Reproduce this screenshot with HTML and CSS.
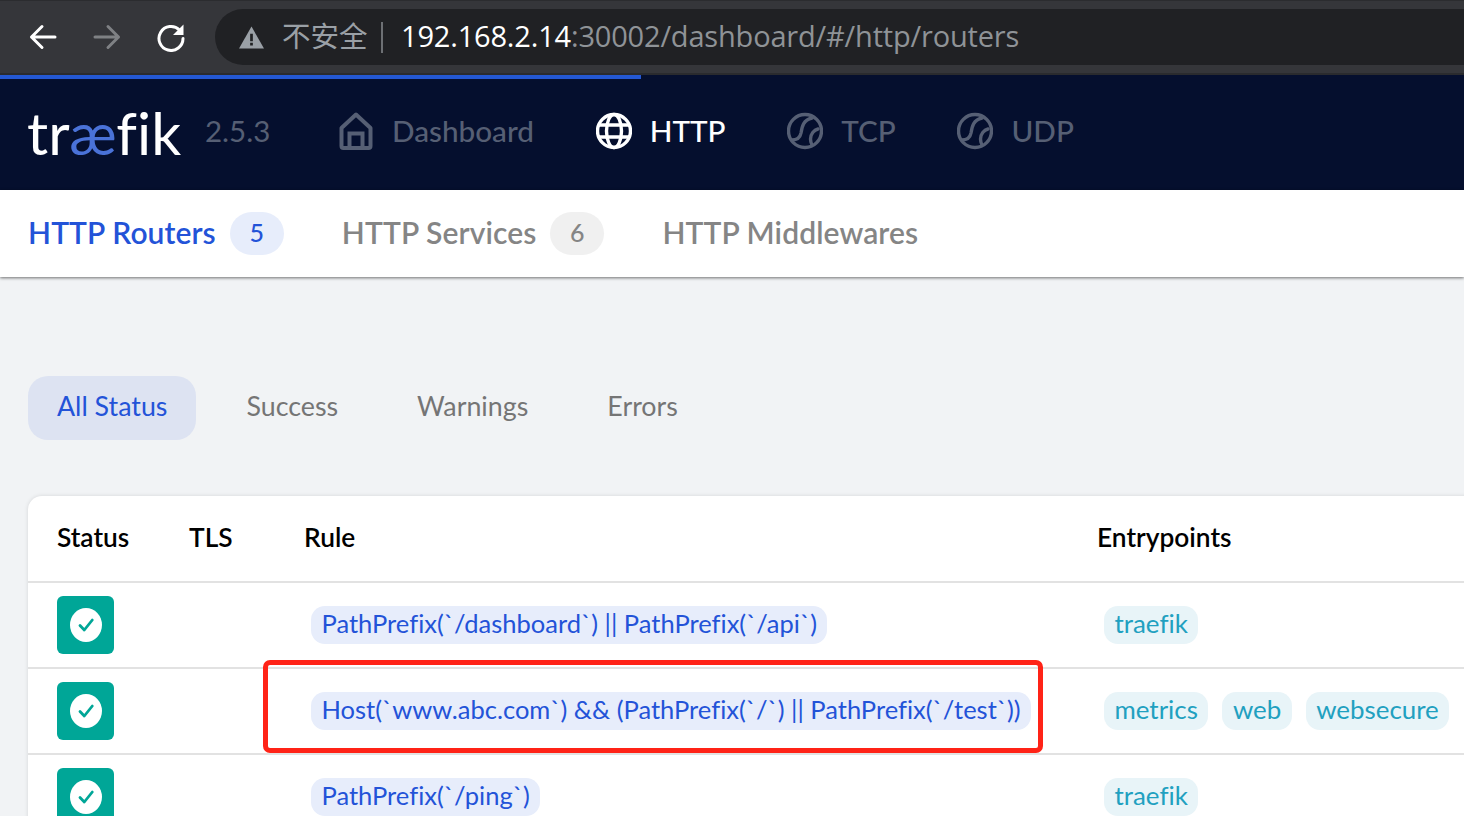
FILE: index.html
```html
<!DOCTYPE html>
<html lang="en">
<head>
<meta charset="utf-8">
<title>Traefik</title>
<link rel="stylesheet" href="styles.css">
</head>
<body>
<div class="browser">
  <svg class="bicon" width="30" height="30" viewBox="0 0 30 30"><path d="M27 15H3.500M14 4.500 3.500 15 14 25.500" fill="none" stroke="#fff" stroke-width="3" stroke-linecap="round" stroke-linejoin="round"/></svg>
  <svg class="bicon dim" width="30" height="30" viewBox="0 0 30 30"><path d="M3 15h23.500M16 4.500 26.500 15 16 25.500" fill="none" stroke="#7f8184" stroke-width="3" stroke-linecap="round" stroke-linejoin="round"/></svg>
  <svg class="bicon" width="30" height="30" viewBox="0 0 30 30"><path d="M23.500 8A12 12 0 1 0 27 16.500" fill="none" stroke="#fff" stroke-width="3" stroke-linecap="round"/><path d="M27.500 2.500v10.500H17z" fill="#fff"/></svg>
  <div class="omni">
    <svg class="warn" width="25" height="23" viewBox="0 0 24 22"><path d="M12 .5 24 21.500H0z" fill="#9aa0a6"/><path d="M10.700 7.500h2.600v7h-2.600zM10.700 16h2.600v2.600h-2.600z" fill="#202124"/></svg>
    <span class="insecure">不安全</span>
    <span class="omni-sep"></span>
    <span class="url"><span class="host">192.168.2.14</span>:30002/dashboard/#/http/routers</span>
  </div>
</div>
<div class="progress"></div>
<header class="topbar">
  <div class="logo">tr<span class="ae">æ</span>fik</div>
  <div class="version">2.5.3</div>
  <nav class="mainnav">
    <a class="navitem">
      <svg width="36" height="38" viewBox="0 0 36 38"><path d="M3.500 16 18 2.500 32.500 16v18a2 2 0 0 1-2 2h-25a2 2 0 0 1-2-2z" fill="none" stroke="currentColor" stroke-width="4" stroke-linejoin="round"/><path d="M11.500 36V21.500h13V36" fill="none" stroke="currentColor" stroke-width="4"/></svg>
      Dashboard</a>
    <a class="navitem">
      <svg class="on" width="36" height="38" viewBox="0 0 36 38"><g fill="none" stroke="currentColor" stroke-width="3.400"><circle cx="18" cy="19" r="16.500"/><ellipse cx="18" cy="19" rx="7.500" ry="16.500"/><path d="M3 13h30M3 25h30"/></g></svg>
      <span class="on">HTTP</span></a>
    <a class="navitem">
      <svg width="36" height="38" viewBox="0 0 36 38"><g fill="none" stroke="currentColor" stroke-width="3.400" stroke-linecap="round"><circle cx="18" cy="19" r="16.500"/><path d="M5 28C10 28 13 26 14 21 15 15 16 8 25 6M31 17C27 18 23.500 22 23.500 27 23.500 29 24 31 25 33"/></g></svg>
      TCP</a>
    <a class="navitem">
      <svg width="36" height="38" viewBox="0 0 36 38"><g fill="none" stroke="currentColor" stroke-width="3.400" stroke-linecap="round"><circle cx="18" cy="19" r="16.500"/><path d="M5 28C10 28 13 26 14 21 15 15 16 8 25 6M31 17C27 18 23.500 22 23.500 27 23.500 29 24 31 25 33"/></g></svg>
      UDP</a>
  </nav>
</header>
<div class="tabs">
  <a class="tab active">HTTP Routers <span class="count">5</span></a>
  <a class="tab">HTTP Services <span class="count">6</span></a>
  <a class="tab">HTTP Middlewares</a>
</div>
<main class="content">
  <div class="filters">
    <a class="filter active">All Status</a>
    <a class="filter">Success</a>
    <a class="filter">Warnings</a>
    <a class="filter">Errors</a>
  </div>
  <div class="card">
    <div class="row head">
      <div>Status</div><div>TLS</div><div>Rule</div><div>Entrypoints</div>
    </div>
    <div class="row">
      <div><span class="status"><svg width="32" height="34" viewBox="0 0 32 34"><ellipse cx="16" cy="17" rx="16" ry="17" fill="#fff"/><path d="M10 17.500l4.300 4.500 8-10" fill="none" stroke="#00a697" stroke-width="2.800" stroke-linecap="round" stroke-linejoin="round"/></svg></span></div>
      <div></div>
      <div><span class="chip rule">PathPrefix(`/dashboard`) || PathPrefix(`/api`)</span></div>
      <div class="eps"><span class="chip ep">traefik</span></div>
    </div>
    <div class="row">
      <div><span class="status"><svg width="32" height="34" viewBox="0 0 32 34"><ellipse cx="16" cy="17" rx="16" ry="17" fill="#fff"/><path d="M10 17.500l4.300 4.500 8-10" fill="none" stroke="#00a697" stroke-width="2.800" stroke-linecap="round" stroke-linejoin="round"/></svg></span></div>
      <div></div>
      <div><span class="chip rule">Host(`www.abc.com`) &amp;&amp; (PathPrefix(`/`) || PathPrefix(`/test`))</span></div>
      <div class="eps"><span class="chip ep">metrics</span><span class="chip ep">web</span><span class="chip ep">websecure</span></div>
    </div>
    <div class="row">
      <div><span class="status"><svg width="32" height="34" viewBox="0 0 32 34"><ellipse cx="16" cy="17" rx="16" ry="17" fill="#fff"/><path d="M10 17.500l4.300 4.500 8-10" fill="none" stroke="#00a697" stroke-width="2.800" stroke-linecap="round" stroke-linejoin="round"/></svg></span></div>
      <div></div>
      <div><span class="chip rule">PathPrefix(`/ping`)</span></div>
      <div class="eps"><span class="chip ep">traefik</span></div>
    </div>
  </div>
</main>
<div class="callout"></div>
</body>
</html>
```
FILE: styles.css
```css
* { box-sizing: border-box; }
html, body { margin: 0; height: 816px; overflow: hidden; }
body { position: relative; background: #f1f3f5; font-family: "Lato", "Noto Sans", sans-serif; font-variant-ligatures: none; }
a { display: inline-flex; align-items: center; }

.browser { height: 75px; background: #35363a; border-top: 1px solid #2b2c2f; border-bottom: 2px solid #2a2b2e; padding: 8px 0 0 28px; display: flex; align-items: flex-start; }
.bicon { margin: 13px 34px 0 0; flex: none; }
.omni { margin-left: -5px; flex: 1; height: 56px; background: #202124; border-radius: 28px 0 0 28px; display: flex; align-items: center; padding-left: 24px; color: #9aa0a6; }
.warn { margin-right: 18px; }
.insecure { font-family: "Noto Sans CJK SC", sans-serif; font-weight: 400; font-size: 28.500px; width: 85px; white-space: nowrap; line-height: 1; margin-top: -4px; }
.omni-sep { width: 2px; height: 31px; background: #6d7074; margin: 0 18px 0 14px; }
.url { font-family: "Open Sans", sans-serif; font-size: 29px; letter-spacing: -.18px; color: #8f9397; white-space: nowrap; line-height: 1; margin-top: -3px; }
.host { color: #fff; }
.progress { position: absolute; left: 0; top: 75px; width: 641px; height: 4px; background: #2458d3; }

.topbar { height: 115px; background: #050f2e; display: flex; align-items: center; padding: 0 0 3px 27px; }
.logo { font-family: "Lato", sans-serif; font-weight: 400; font-size: 59px; line-height: 60px; color: #fff; width: 178px; margin-top: 3px; }
.ae { color: #4a72d8; }
.version { font-size: 29.500px; color: #565f74; width: 133px; padding-bottom: 2px; }
.mainnav { display: flex; gap: 61.700px; }
.navitem { gap: 18px; font-size: 29.700px; font-weight: 500; color: #565f74; padding-bottom: 2px; }
.navitem svg { margin-top: 2px; }
.on { color: #fff; }

.tabs { height: 87px; background: #fff; box-shadow: 0 1px 3px rgba(0,0,0,.55); display: flex; align-items: center; padding: 0 0 3px 28px; gap: 58px; position: relative; }
.tab { gap: 14px; font-size: 30px; font-weight: 600; color: #858585; letter-spacing: .1px; }
.tab.active { color: #2353d8; }
.count { width: 54px; height: 43px; border-radius: 22px; background: #f0f0f0; font-size: 25px; font-weight: 500; display: flex; align-items: center; justify-content: center; margin-bottom: -3px; padding-bottom: 3px; }
.tab.active .count { background: #e7edfb; }

.content { padding: 99px 0 0 28px; }
.filters { display: flex; height: 64px; align-items: center; gap: 21px; }
.filter { height: 64px; padding: 0 29px 5px; border-radius: 20px; font-size: 26.800px; color: #757575; }
.filter.active { background: #dde3f2; color: #2353d8; }

.card { margin-top: 56px; width: 1500px; background: #fff; border-radius: 14px 0 0 0; box-shadow: 0 0 4px rgba(0,0,0,.12); }
.row { display: grid; grid-template-columns: 132px 115px 793px 1fr; padding-left: 29px; height: 86px; align-items: center; border-bottom: 2px solid #e2e2e2; }
.row.head { height: 87px; font-size: 26.300px; font-weight: 600; color: #000; padding-bottom: 4px; }
.status { width: 57px; height: 58px; background: #00a697; border-radius: 6px; display: flex; align-items: center; justify-content: center; }
.chip { display: inline-flex; align-items: center; height: 38px; padding: 0 10.500px 5px; border-radius: 14px; white-space: nowrap; }
.rule { margin-left: 7px; background: #e7edfb; color: #2353d8; font-size: 25.500px; }
.eps { display: flex; gap: 14px; margin-left: 7px; }
.ep { background: #e8f4f8; color: #21a0c0; font-size: 25.900px; }

.callout { position: absolute; left: 263px; top: 660px; width: 780px; height: 93px; border: 5px solid #ff2317; border-radius: 7px; }
```
